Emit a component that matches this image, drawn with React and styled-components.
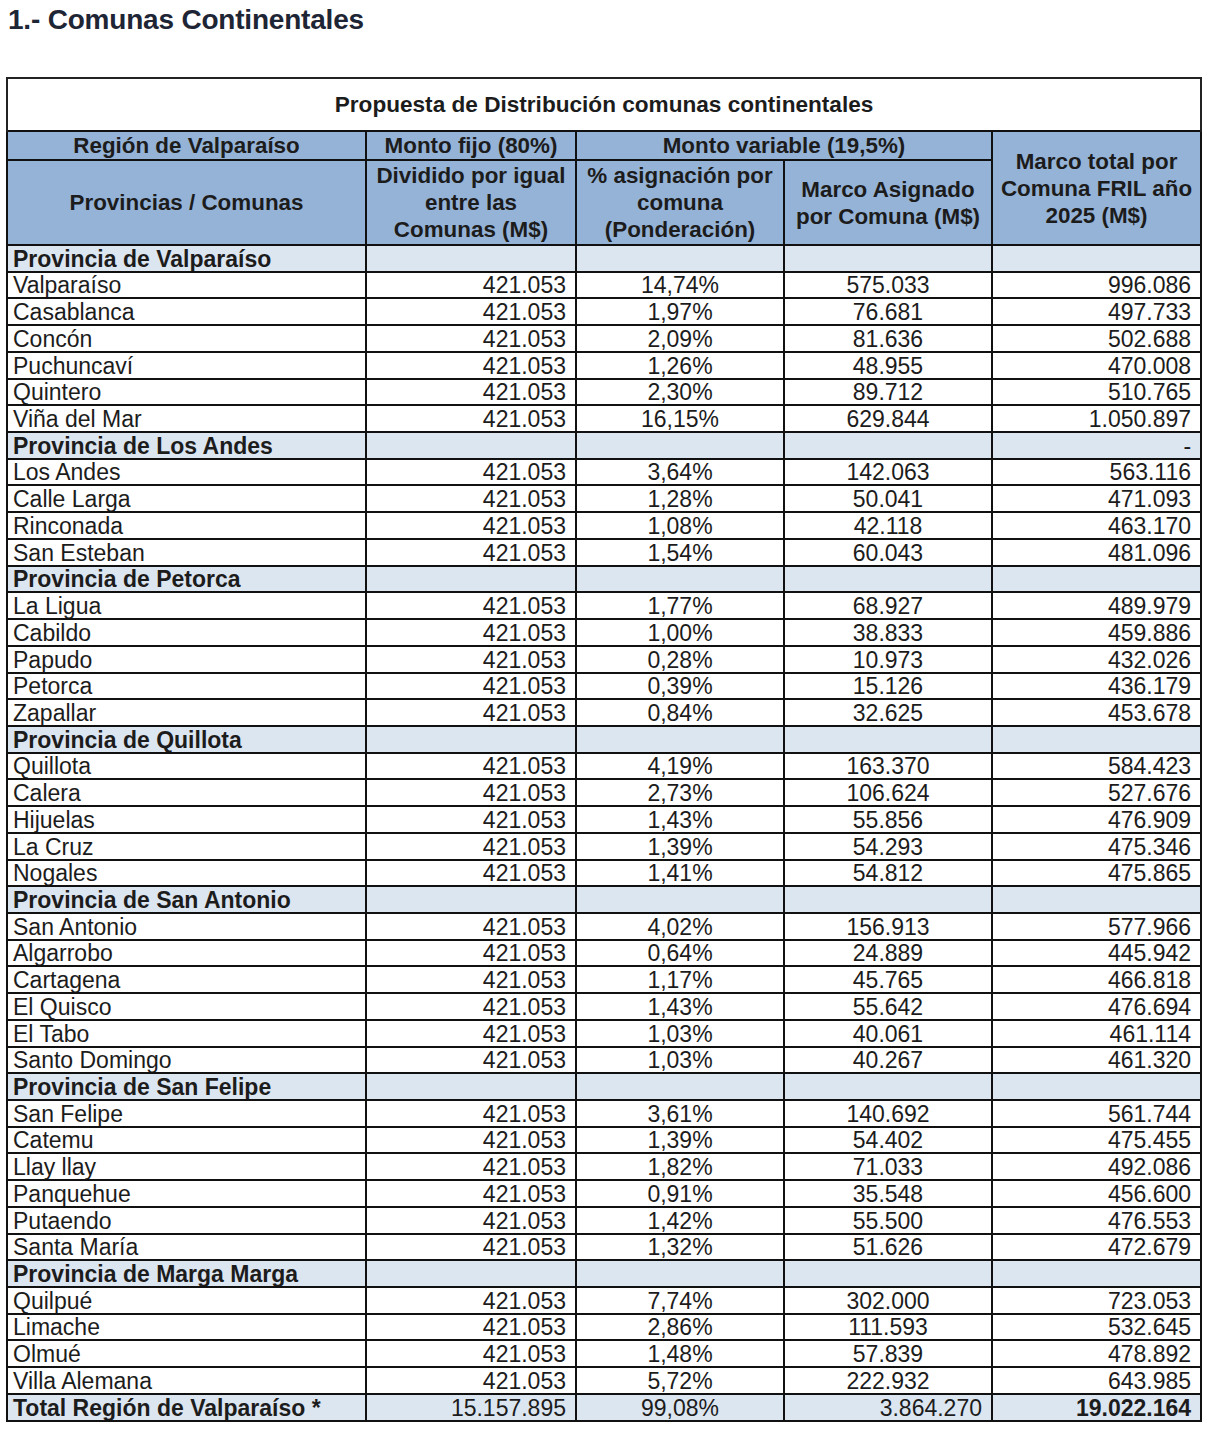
import React from "react";
import styled, { createGlobalStyle } from "styled-components";

const GlobalStyle = createGlobalStyle`
  html, body { margin: 0; padding: 0; background: #ffffff; }
  body { font-family: "Liberation Sans", Arial, sans-serif; color: #1c1c1c; }
`;

const Page = styled.div`
  padding: 4px 0 20px 6px;
  width: 1194px;
`;

const Heading = styled.h1`
  margin: 0 0 41px 2px;
  font-size: 28px;
  line-height: 32px;
  font-weight: 700;
  color: #1e2535;
  letter-spacing: -0.2px;
`;

const Table = styled.table`
  width: 1194px;
  table-layout: fixed;
  border-collapse: collapse;
  font-size: 23px;
  color: #1c1c1c;
`;

const TitleCell = styled.td`
  height: 51px;
  padding: 0;
  text-align: center;
  font-weight: 700;
  font-size: 22.6px;
  background: #ffffff;
  border: 2px solid #222;
  border-bottom: 1px solid #555;
`;

const HeadCell = styled.th`
  height: ${(p) => p.$h || 25}px;
  padding: 0 1px;
  background: #95b3d7;
  font-weight: 700;
  font-size: 22.4px;
  line-height: 27px;
  text-align: center;
  vertical-align: middle;
  border: 2px solid #111;
  white-space: nowrap;
  overflow: hidden;
`;

const Row = styled.tr`
  height: 26.72px;
`;

const Cell = styled.td`
  padding: 0 ${(p) => (p.$align === "left" || !p.$align ? "0" : "9px")} 0
    ${(p) => (p.$align === "left" || !p.$align ? "5px" : "9px")};
  text-align: ${(p) => p.$align || "left"};
  font-weight: ${(p) => (p.$bold ? 700 : 400)};
  background: ${(p) => (p.$tone === "light" ? "#dce6f1" : "#ffffff")};
  line-height: 24px;
  vertical-align: bottom;
  border: 2px solid #111;
  white-space: nowrap;
  overflow: hidden;
`;

const sections = [
  {
    name: "Provincia de Valparaíso",
    rows: [
      ["Valparaíso", "14,74%", "575.033", "996.086"],
      ["Casablanca", "1,97%", "76.681", "497.733"],
      ["Concón", "2,09%", "81.636", "502.688"],
      ["Puchuncaví", "1,26%", "48.955", "470.008"],
      ["Quintero", "2,30%", "89.712", "510.765"],
      ["Viña del Mar", "16,15%", "629.844", "1.050.897"],
    ],
  },
  {
    name: "Provincia de Los Andes",
    total: "-",
    rows: [
      ["Los Andes", "3,64%", "142.063", "563.116"],
      ["Calle Larga", "1,28%", "50.041", "471.093"],
      ["Rinconada", "1,08%", "42.118", "463.170"],
      ["San Esteban", "1,54%", "60.043", "481.096"],
    ],
  },
  {
    name: "Provincia de Petorca",
    rows: [
      ["La Ligua", "1,77%", "68.927", "489.979"],
      ["Cabildo", "1,00%", "38.833", "459.886"],
      ["Papudo", "0,28%", "10.973", "432.026"],
      ["Petorca", "0,39%", "15.126", "436.179"],
      ["Zapallar", "0,84%", "32.625", "453.678"],
    ],
  },
  {
    name: "Provincia de Quillota",
    rows: [
      ["Quillota", "4,19%", "163.370", "584.423"],
      ["Calera", "2,73%", "106.624", "527.676"],
      ["Hijuelas", "1,43%", "55.856", "476.909"],
      ["La Cruz", "1,39%", "54.293", "475.346"],
      ["Nogales", "1,41%", "54.812", "475.865"],
    ],
  },
  {
    name: "Provincia de San Antonio",
    rows: [
      ["San Antonio", "4,02%", "156.913", "577.966"],
      ["Algarrobo", "0,64%", "24.889", "445.942"],
      ["Cartagena", "1,17%", "45.765", "466.818"],
      ["El Quisco", "1,43%", "55.642", "476.694"],
      ["El Tabo", "1,03%", "40.061", "461.114"],
      ["Santo Domingo", "1,03%", "40.267", "461.320"],
    ],
  },
  {
    name: "Provincia de San Felipe",
    rows: [
      ["San Felipe", "3,61%", "140.692", "561.744"],
      ["Catemu", "1,39%", "54.402", "475.455"],
      ["Llay llay", "1,82%", "71.033", "492.086"],
      ["Panquehue", "0,91%", "35.548", "456.600"],
      ["Putaendo", "1,42%", "55.500", "476.553"],
      ["Santa María", "1,32%", "51.626", "472.679"],
    ],
  },
  {
    name: "Provincia de Marga Marga",
    rows: [
      ["Quilpué", "7,74%", "302.000", "723.053"],
      ["Limache", "2,86%", "111.593", "532.645"],
      ["Olmué", "1,48%", "57.839", "478.892"],
      ["Villa Alemana", "5,72%", "222.932", "643.985"],
    ],
  },
];

export default function App() {
  return (
    <>
      <GlobalStyle />
      <Page>
        <Heading>1.- Comunas Continentales</Heading>
        <Table>
          <colgroup>
            <col style={{ width: 359 }} />
            <col style={{ width: 210 }} />
            <col style={{ width: 208 }} />
            <col style={{ width: 208 }} />
            <col style={{ width: 209 }} />
          </colgroup>
          <thead>
            <tr>
              <TitleCell colSpan={5}>Propuesta de Distribución comunas continentales</TitleCell>
            </tr>
            <tr>
              <HeadCell>Región de Valparaíso</HeadCell>
              <HeadCell>Monto fijo (80%)</HeadCell>
              <HeadCell colSpan={2}>Monto variable (19,5%)</HeadCell>
              <HeadCell rowSpan={2}>
                Marco total por
                <br />
                Comuna FRIL año
                <br />
                2025 (M$)
              </HeadCell>
            </tr>
            <tr>
              <HeadCell $h={83}>Provincias / Comunas</HeadCell>
              <HeadCell $h={83}>
                Dividido por igual
                <br />
                entre las
                <br />
                Comunas (M$)
              </HeadCell>
              <HeadCell $h={83}>
                % asignación por
                <br />
                comuna
                <br />
                (Ponderación)
              </HeadCell>
              <HeadCell $h={83}>
                Marco Asignado
                <br />
                por Comuna (M$)
              </HeadCell>
            </tr>
          </thead>
          <tbody>
            {sections.map((s) => (
              <React.Fragment key={s.name}>
                <Row>
                  <Cell $tone="light" $bold>
                    {s.name}
                  </Cell>
                  <Cell $tone="light" $align="right" />
                  <Cell $tone="light" $align="center" />
                  <Cell $tone="light" $align="center" />
                  <Cell $tone="light" $align="right">
                    {s.total || ""}
                  </Cell>
                </Row>
                {s.rows.map((r) => (
                  <Row key={r[0]}>
                    <Cell>{r[0]}</Cell>
                    <Cell $align="right">421.053</Cell>
                    <Cell $align="center">{r[1]}</Cell>
                    <Cell $align="center">{r[2]}</Cell>
                    <Cell $align="right">{r[3]}</Cell>
                  </Row>
                ))}
              </React.Fragment>
            ))}
            <Row>
              <Cell $tone="light" $bold>
                Total Región de Valparaíso *
              </Cell>
              <Cell $tone="light" $align="right">15.157.895</Cell>
              <Cell $tone="light" $align="center">99,08%</Cell>
              <Cell $tone="light" $align="right">3.864.270</Cell>
              <Cell $tone="light" $align="right" $bold>
                19.022.164
              </Cell>
            </Row>
          </tbody>
        </Table>
      </Page>
    </>
  );
}
